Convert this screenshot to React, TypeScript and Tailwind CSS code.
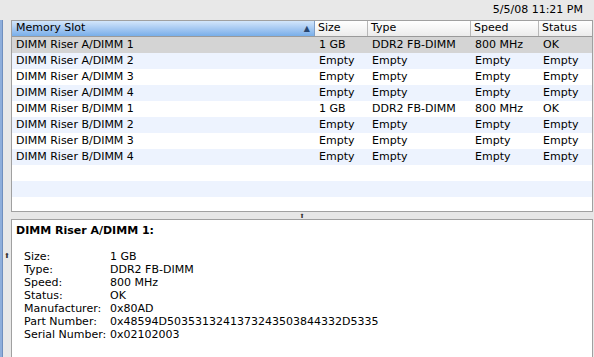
import React from "react";

const rows = [
  { slot: "DIMM Riser A/DIMM 1", size: "1 GB", type: "DDR2 FB-DIMM", speed: "800 MHz", status: "OK" },
  { slot: "DIMM Riser A/DIMM 2", size: "Empty", type: "Empty", speed: "Empty", status: "Empty" },
  { slot: "DIMM Riser A/DIMM 3", size: "Empty", type: "Empty", speed: "Empty", status: "Empty" },
  { slot: "DIMM Riser A/DIMM 4", size: "Empty", type: "Empty", speed: "Empty", status: "Empty" },
  { slot: "DIMM Riser B/DIMM 1", size: "1 GB", type: "DDR2 FB-DIMM", speed: "800 MHz", status: "OK" },
  { slot: "DIMM Riser B/DIMM 2", size: "Empty", type: "Empty", speed: "Empty", status: "Empty" },
  { slot: "DIMM Riser B/DIMM 3", size: "Empty", type: "Empty", speed: "Empty", status: "Empty" },
  { slot: "DIMM Riser B/DIMM 4", size: "Empty", type: "Empty", speed: "Empty", status: "Empty" },
];

const details = [
  ["Size:", "1 GB"],
  ["Type:", "DDR2 FB-DIMM"],
  ["Speed:", "800 MHz"],
  ["Status:", "OK"],
  ["Manufacturer:", "0x80AD"],
  ["Part Number:", "0x48594D503531324137324350384433 2D5335".replace(" ", "")],
  ["Serial Number:", "0x02102003"],
];

const App = () => {
  return (
    <div
      className="w-[594px] h-[357px] bg-[#e8e8e8] flex flex-col overflow-hidden text-[11px] text-black"
      style={{ fontFamily: '"DejaVu Sans", "Liberation Sans", sans-serif' }}
    >
      {/* top bar */}
      <div className="h-[20px] flex items-center justify-end pr-[11px] shrink-0">
        <span>5/5/08 11:21 PM</span>
      </div>

      <div className="flex flex-1 min-h-0">
        {/* left strip */}
        <div className="w-[11px] shrink-0 flex">
          <div className="w-[3px] bg-[#8eaedb] border-r border-[#6f8fbf]" />
          <div className="flex-1 flex flex-col">
            <div className="h-[233px]" />
            <span className="text-[7px] leading-none text-[#333] ml-[1px]">⬆</span>
          </div>
        </div>

        {/* main */}
        <div className="flex-1 flex flex-col min-w-0 pr-[1px]">
          {/* table */}
          <div className="h-[192px] border border-[#a0a0a0] bg-white flex flex-col overflow-hidden">
            {/* header */}
            <div className="h-[16px] flex border-b border-[#9a9a9a] shrink-0">
              <div className="w-[303px] flex items-center justify-between pl-[4px] pr-[4px] bg-gradient-to-b from-[#d3e6fb] via-[#a6c9f2] to-[#78aee9] border-r border-[#7f9fc8]">
                <span>Memory Slot</span>
                <span className="text-[8px] text-[#27466f]">▲</span>
              </div>
              <div className="w-[53px] flex items-center pl-[3px] bg-gradient-to-b from-white to-[#ececec] border-r border-[#b8b8b8]">Size</div>
              <div className="w-[103px] flex items-center pl-[3px] bg-gradient-to-b from-white to-[#ececec] border-r border-[#b8b8b8]">Type</div>
              <div className="w-[68px] flex items-center pl-[3px] bg-gradient-to-b from-white to-[#ececec] border-r border-[#b8b8b8]">Speed</div>
              <div className="flex-1 flex items-center pl-[3px] bg-gradient-to-b from-white to-[#ececec]">Status</div>
            </div>
            {rows.map((r, i) => (
              <div
                key={i}
                className={`h-[16px] flex items-center shrink-0 ${
                  i === 0 ? "bg-[#d4d4d4]" : i % 2 === 1 ? "bg-[#edf3fe]" : "bg-white"
                }`}
              >
                <div className="w-[304px] pl-[4px] whitespace-nowrap">{r.slot}</div>
                <div className="w-[53px] pl-[3px] whitespace-nowrap">{r.size}</div>
                <div className="w-[103px] pl-[3px] whitespace-nowrap">{r.type}</div>
                <div className="w-[68px] pl-[3px] whitespace-nowrap">{r.speed}</div>
                <div className="flex-1 pl-[3px] whitespace-nowrap">{r.status}</div>
              </div>
            ))}
            <div className="h-[16px] bg-white shrink-0" />
            <div className="h-[16px] bg-[#edf3fe] shrink-0" />
            <div className="flex-1 bg-white" />
          </div>

          {/* splitter */}
          <div className="h-[7px] bg-[#e6e6e6] flex items-center justify-center shrink-0">
            <span className="text-[6px] leading-none text-[#333]">⬆</span>
          </div>

          {/* detail pane */}
          <div className="flex-1 border border-[#a0a0a0] border-b-0 bg-white pl-[4px] pt-[3px]">
            <div className="font-bold leading-[15px]">DIMM Riser A/DIMM 1:</div>
            <div className="mt-[12px] pl-[8px]">
              {details.map(([k, v]) => (
                <div key={k} className="flex leading-[13px]">
                  <span className="w-[86px] shrink-0">{k}</span>
                  <span className="whitespace-nowrap">{v}</span>
                </div>
              ))}
            </div>
          </div>
        </div>
      </div>
    </div>
  );
};

export default App;
